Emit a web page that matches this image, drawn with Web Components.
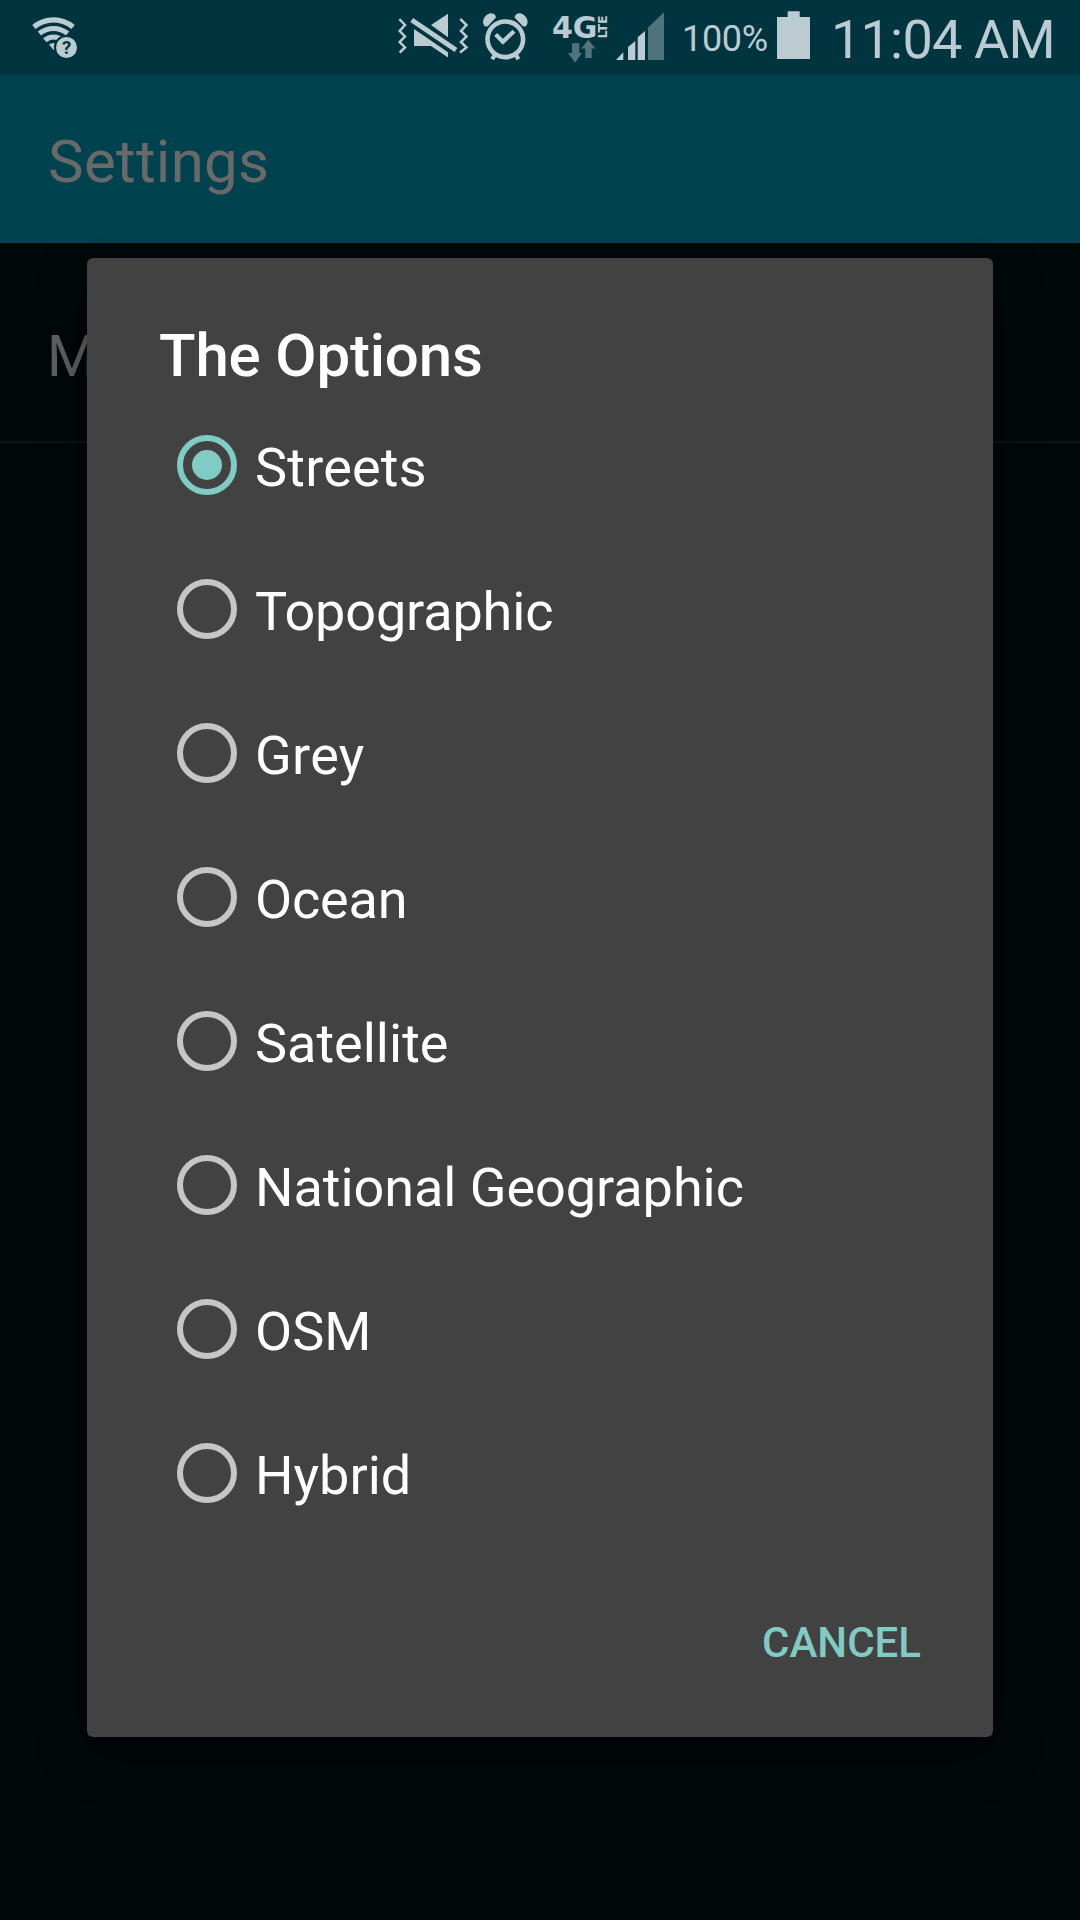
<!DOCTYPE html>
<html lang="en">
<head>
<meta charset="utf-8">
<title>Settings</title>
<style>
html,body{margin:0;height:100%;background:#00080a}
body{font-family:Roboto,"Liberation Sans",sans-serif;overflow:hidden}
</style>
</head>
<body>
<settings-screen>
  <status-bar slot="status" battery="100%" time="11:04 AM"></status-bar>
  <app-bar slot="bar">Settings</app-bar>
  <setting-row slot="content">M</setting-row>
  <options-dialog slot="dialog">
    <span slot="title">The Options</span>
    <radio-option checked style="letter-spacing:.2px">Streets</radio-option>
    <radio-option style="letter-spacing:-.15px">Topographic</radio-option>
    <radio-option style="letter-spacing:.3px">Grey</radio-option>
    <radio-option style="letter-spacing:-.15px">Ocean</radio-option>
    <radio-option>Satellite</radio-option>
    <radio-option style="letter-spacing:-.05px">National Geographic</radio-option>
    <radio-option>OSM</radio-option>
    <radio-option>Hybrid</radio-option>
    <span slot="action">CANCEL</span>
  </options-dialog>
</settings-screen>
<script>
const define = (name, render) => customElements.define(name, class extends HTMLElement {
  connectedCallback() {
    if (!this.shadowRoot) this.attachShadow({ mode: 'open' }).innerHTML = render(this);
  }
});

define('settings-screen', () => `
<style>
:host{display:flex;flex-direction:column;width:1080px;height:1920px;position:relative;overflow:hidden;background:#00080a}
.overlay{position:absolute;left:87px;top:258px;width:906px;height:1479px}
</style>
<slot name="status"></slot><slot name="bar"></slot><slot name="content"></slot>
<div class="overlay"><slot name="dialog"></slot></div>`);

define('status-bar', el => `
<style>
:host{display:flex;align-items:flex-start;height:75px;background:#00343f;color:#bccbd1;fill:#bccbd1;white-space:nowrap}
svg{display:block;flex:none;height:75px}
.space{flex:1}
.line{fill:none;stroke:#bccbd1}
.dim{fill:#4f747c}
.battery{width:107px;font-size:36px;line-height:79px;box-sizing:border-box;padding-left:12px;letter-spacing:-.3px}
.time{width:249px;font-size:54px;line-height:79px;text-align:right;box-sizing:border-box;padding-right:30px;letter-spacing:-.8px}
</style>
<svg width="100" viewBox="0 0 100 75">
  <g class="line" stroke-width="5.2">
    <path d="M33.9 27.1A30.5 30.5 0 0 1 73.1 27.1"/>
    <path d="M39.4 33.6A22 22 0 0 1 67.6 33.6"/>
    <path d="M44.8 40.2A13.5 13.5 0 0 1 62.2 40.2"/>
  </g>
  <path d="M49 44.5Q53.5 41.3 58 44.5L53.5 50Z"/>
  <circle cx="66.5" cy="47.5" r="12.6" fill="#00343f"/>
  <circle cx="66.5" cy="47.5" r="10.5"/>
  <text x="66.5" y="54" font-size="18.5" font-weight="700" text-anchor="middle" fill="#00343f">?</text>
</svg>
<div class="space"></div>
<svg width="90" viewBox="390 0 90 75">
  <path class="line" stroke-width="2.5" d="M399.3 19L405 25L399.7 31L405 36.5L399.7 42L405 47.5L399.7 52.5M460.3 19L466.5 25L461 31L466.5 36.5L461 42L466.5 47.5L460 52.5"/>
  <path d="M431 25L448 13.7V37.3ZM414 29V46H431L448 57.5V52.3Z"/>
  <path class="line" stroke-width="5" d="M411.7 20L456 50"/>
</svg>
<svg width="65" viewBox="480 0 65 75">
  <circle class="line" cx="505.3" cy="39.3" r="17.8" stroke-width="4.6"/>
  <path class="line" stroke-width="4.2" d="M495.7 34.6L502.9 41.8L514 31.2M495.2 54L492.2 59.3M515.4 54L518.4 59.3"/>
  <path d="M484.5 26.3L487.5 26.5L496 17.5Q495.5 13 490 13.2Q483 15.5 483 23Z"/>
  <path transform="translate(1010.6 0) scale(-1 1)" d="M484.5 26.3L487.5 26.5L496 17.5Q495.5 13 490 13.2Q483 15.5 483 23Z"/>
</svg>
<svg width="67" viewBox="545 0 67 75">
  <text x="552" y="38.3" font-family="DejaVu Sans" font-weight="700" font-size="30.5" textLength="45.5" lengthAdjust="spacingAndGlyphs">4G</text>
  <text transform="translate(607 38.5) rotate(-90)" font-family="DejaVu Sans" font-weight="700" font-size="12" textLength="23" lengthAdjust="spacingAndGlyphs">LTE</text>
  <path class="dim" d="M572 43.3H579.3V53H582L575 62.7L568 53H572ZM588.3 39.7L595.3 48.5H591.7V58H585.3V48.5H581.3Z"/>
</svg>
<svg width="58" viewBox="612 0 58 75">
  <path d="M616 60L623.3 52.3V60ZM628 60V47L635.3 41V60ZM637.7 60V37.3L645 31V60Z"/>
  <path class="dim" d="M648 60V27.5L664 12.3V60Z"/>
</svg>
<div class="battery">${el.getAttribute('battery')}</div>
<svg width="54" viewBox="777 0 54 75"><path d="M777 59V17H787.7V11.3H799.7V17H810V59Z"/></svg>
<div class="time">${el.getAttribute('time')}</div>`);

define('app-bar', () => `
<style>
:host{display:flex;align-items:center;height:168px;box-sizing:border-box;padding:5px 48px 0;background:#00434f;color:#696969;font-size:60px;line-height:80px;letter-spacing:.28px}
</style><slot></slot>`);

define('setting-row', () => `
<style>
:host{display:flex;align-items:center;height:200px;box-sizing:border-box;padding:29px 47px 0;border-bottom:2px solid #0b1315;color:#5e6162;font-size:57px;line-height:76px;font-weight:400}
</style><slot></slot>`);

define('options-dialog', () => `
<style>
:host{display:flex;flex-direction:column;height:100%;box-sizing:border-box;background:#424242;border-radius:6px;color:#fff;box-shadow:0 16px 50px rgba(0,0,0,.4)}
h2{margin:0;padding:60px 72px 0;font-size:60px;line-height:75px;font-weight:500;letter-spacing:-.18px}
.list{display:flex;flex-direction:column;padding:0 72px}
footer{display:flex;justify-content:flex-end;align-items:center;height:96px;padding:50px 72px 0;color:#80cbc4;font-size:42px;font-weight:500;line-height:56px}
</style>
<h2><slot name="title"></slot></h2>
<div class="list"><slot></slot></div>
<footer><slot name="action"></slot></footer>`);

define('radio-option', el => `
<style>
:host{display:flex;align-items:center;height:144px;font-size:54px;line-height:72px;white-space:nowrap}
svg{display:block;flex:none;color:#c6c6c6}
:host([checked]) svg{color:#80cbc4}
.label{padding-top:5px}
</style>
<svg width="96" height="96" viewBox="0 0 96 96"><circle cx="48" cy="48" r="27" fill="none" stroke="currentColor" stroke-width="6"/>${el.hasAttribute('checked') ? '<circle cx="48" cy="48" r="15" fill="currentColor"/>' : ''}</svg>
<div class="label"><slot></slot></div>`);
</script>
</body>
</html>
